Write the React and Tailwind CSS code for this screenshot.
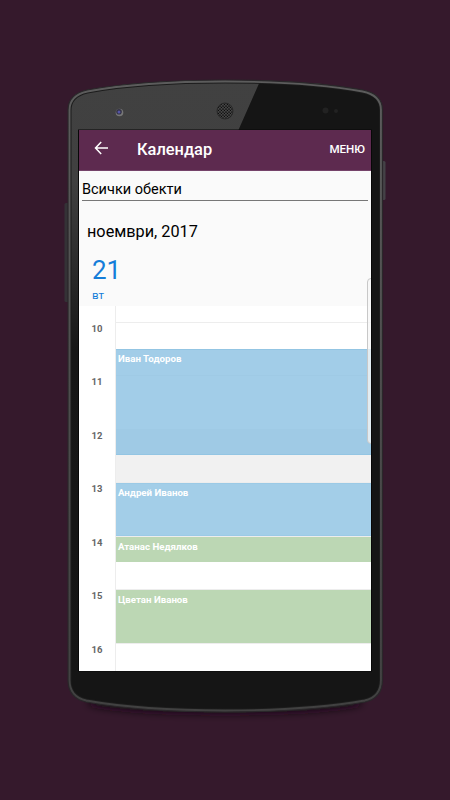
import React from "react";

const hours = [10, 11, 12, 13, 14, 15, 16];

const events = [
  { id: 1, name: "Иван Тодоров", className: "mt-[43.5px] h-[106px] bg-[#8bc1e2]/80 border-[#93c5e3]" },
  { id: 2, name: "Андрей Иванов", className: "mt-[28px] h-[52.5px] bg-[#a3cee8] border-[#9bcae6]" },
  { id: 3, name: "Атанас Недялков", className: "mt-[1.5px] h-[25px] bg-[#bcd7b4] border-[#bcd7b4]" },
  { id: 4, name: "Цветан Иванов", className: "mt-[28px] h-[52.5px] bg-[#bcd7b4] border-[#bcd7b4]" },
];

function Phone() {
  const body =
    "M68 110 C68 98 76 92.500 87 90 C125 83 175 80 225 80 C275 80 325 83 363 90 C375 92.500 382.5 98 382.5 110 L382.5 680 C382.5 692 376 699.500 365 702 C325 709 275 712 225 712 C175 712 125 709 86 702 C75 699.500 68 692 68 680 Z";
  return (
    <svg className="absolute inset-0" width="450" height="800" viewBox="0 0 450 800">
      <defs>
        <linearGradient id="glare" x1="0" y1="0" x2="0" y2="1">
          <stop offset="0" stopColor="#414141" />
          <stop offset="0.18" stopColor="#404040" />
          <stop offset="0.45" stopColor="#171717" />
          <stop offset="1" stopColor="#151515" />
        </linearGradient>
        <linearGradient id="rim" x1="0" y1="0" x2="0" y2="1">
          <stop offset="0" stopColor="#5c5c5c" />
          <stop offset="0.5" stopColor="#4d4d4d" />
          <stop offset="1" stopColor="#414141" />
        </linearGradient>
        <pattern id="mesh" width="3" height="3" patternUnits="userSpaceOnUse">
          <rect width="3" height="3" fill="#454545" />
          <circle cx="1" cy="1" r="0.85" fill="#0c0c0c" />
          <circle cx="2.5" cy="2.5" r="0.7" fill="#0c0c0c" />
        </pattern>
        <filter id="soft" x="-20%" y="-100%" width="140%" height="300%">
          <feGaussianBlur stdDeviation="4" />
        </filter>
        <clipPath id="bodyClip">
          <path d={body} />
        </clipPath>
      </defs>
      <ellipse cx="225" cy="702" rx="137" ry="11" fill="#150812" filter="url(#soft)" />
      {/* side buttons */}
      <rect x="64.500" y="203" width="5" height="99" rx="1.5" fill="#343236" />
      <rect x="381" y="161" width="4.500" height="39" rx="1.500" fill="#444246" />
      <path d={body} fill="#151515" />
      <g clipPath="url(#bodyClip)">
        <path d="M60 70 H265 L238 131 L79 420 V690 H60 Z" fill="url(#glare)" />
        <path d={body} fill="none" stroke="#1c1c1c" strokeWidth="7" />
        <path d={body} fill="none" stroke="url(#rim)" strokeWidth="5" />
      </g>
      <path d={body} fill="none" stroke="#2a272a" strokeWidth="1.200" />
      <circle cx="119.500" cy="112.500" r="3.800" fill="#777" />
      <circle cx="119" cy="111.800" r="2.800" fill="#333244" />
      <circle cx="119" cy="112" r="1.500" fill="#5555a8" />
      <circle cx="225" cy="111" r="8" fill="url(#mesh)" stroke="#292929" />
      <circle cx="325.500" cy="110.500" r="3" fill="#222" />
      <circle cx="336" cy="111" r="2" fill="#222" />
      <rect x="78" y="129.500" width="294" height="542" fill="#080808" />
    </svg>
  );
}

function Header() {
  return (
    <header className="flex h-[41px] shrink-0 items-center border-b border-[#75436a] bg-[#5d2a4f] pr-[6px] pl-[14.500px] text-white">
      <svg className="-mt-1" width="15" height="14" viewBox="0 0 15 14" fill="none" stroke="currentColor" strokeWidth="1.500">
        <path d="M7.200 1 L1.500 7 L7.200 13 M1.500 7 H14" />
      </svg>
      <h1 className="-mt-px ml-[28.500px] text-[16.400px] leading-5 font-medium">Календар</h1>
      <button className="-mt-[3px] ml-auto text-[11.600px] leading-4 font-medium">МЕНЮ</button>
    </header>
  );
}

function Schedule() {
  return (
    <div className="relative h-[365px] shrink-0 overflow-hidden bg-white">
      <div className="h-4 pl-[36px]">
        <div className="h-full border-l border-[#ededed]" />
      </div>
      {hours.map((hour) => (
        <div key={hour} className="flex h-[53.600px]">
          <div className="w-[36px] text-center text-[9.500px] leading-[13px] font-bold text-[#666]">
            {hour}
          </div>
          <div
            className={`flex-1 border-t border-l border-[#ededed] ${
              hour === 12 ? "bg-[#f1f1f1]" : ""
            }`}
          />
        </div>
      ))}
      <div className="absolute top-0 right-0 left-[37px]">
        {events.map((event) => (
          <div
            key={event.id}
            className={`border-y pt-[1.500px] pl-[2px] text-[9.700px] leading-[14px] font-bold text-white ${event.className}`}
          >
            {event.name}
          </div>
        ))}
      </div>
    </div>
  );
}

export default function App() {
  return (
    <div className="relative h-[800px] w-[450px] overflow-hidden bg-[#35192c] font-['Roboto',sans-serif]">
      <Phone />
      <div className="relative mt-[130px] ml-[79px] flex h-[540.500px] w-[292px] flex-col overflow-hidden bg-[#fafafa]">
        <Header />
        <div className="mx-[3px] h-[30px] border-b border-[#777] pt-[9px] text-[14.500px] leading-5 text-black">
          Всички обекти
        </div>
        <div className="mt-[20.500px] pl-[8px] text-[16.250px] leading-5 text-black">
          ноември, 2017
        </div>
        <div className="flex h-[64px] shrink-0 flex-col items-start pl-[13px] text-[#147dd9]">
          <div className="mt-[13px] text-[26px] leading-[30px]">21</div>
          <div className="mt-[3px] text-[11.500px] leading-[14px]">вт</div>
        </div>
        <Schedule />
        <div className="absolute top-[148px] -right-[8px] h-[166px] w-[12px] rounded-[4px] border border-[#c8c8c8] bg-[#f5f5f5]/75" />
      </div>
    </div>
  );
}
